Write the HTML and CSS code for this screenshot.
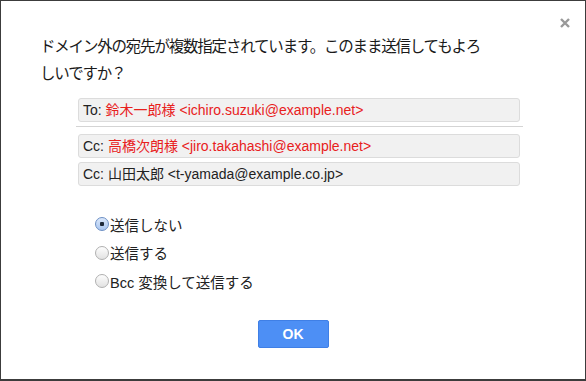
FILE: index.html
```html
<!DOCTYPE html>
<html lang="ja">
<head>
    <meta charset="UTF-8">
    <meta name="viewport" content="width=device-width, initial-scale=1.0">
    <title>送信確認</title>
    <link rel="stylesheet" href="styles.css">
</head>
<body>
    <div class="dialog">
        <span class="close">
            <svg width="10" height="10" viewBox="0 0 10 10"><path d="M1 1L9 9M9 1L1 9" stroke="#999" stroke-width="2.4"/></svg>
        </span>
        <p class="title">ドメイン外の宛先が複数指定されています。このまま送信してもよろしいですか？</p>

        <div class="recipients">
            <div class="addr">To: <span class="ext">鈴木一郎様 &lt;ichiro.suzuki@example.net&gt;</span></div>
            <div class="sep"></div>
            <div class="addr">Cc: <span class="ext">高橋次朗様 &lt;jiro.takahashi@example.net&gt;</span></div>
            <div class="addr">Cc: 山田太郎 &lt;t-yamada@example.co.jp&gt;</div>
        </div>

        <div class="options">
            <label class="option"><input type="radio" name="send" checked>送信しない</label>
            <label class="option"><input type="radio" name="send">送信する</label>
            <label class="option"><input type="radio" name="send">Bcc 変換して送信する</label>
        </div>

        <div class="actions">
            <button class="ok">OK</button>
        </div>
    </div>
</body>
</html>
```

FILE: styles.css
```css
html, body {
    margin: 0;
    height: 100%;
}
body {
    font-family: "Liberation Sans", Arial, "Noto Sans CJK JP", sans-serif;
    color: #222;
    background: #fff;
}
.dialog {
    position: relative;
    box-sizing: border-box;
    height: 381px;
    border: 1px solid #3c3c3c;
    border-bottom-width: 2px;
    padding: 31px 39px 0;
}
.close {
    position: absolute;
    top: 17px;
    right: 15px;
    display: flex;
}
.title {
    margin: 0;
    width: 448px;
    font-family: "Noto Sans CJK JP", sans-serif;
    font-size: 15.5px;
    letter-spacing: -1.2px;
    line-height: 27px;
    color: #1a1a1a;
}
.recipients {
    margin: 12px 0 0 38px;
    width: 442px;
}
.addr {
    box-sizing: border-box;
    height: 24px;
    line-height: 22px;
    padding: 0 4px;
    margin-bottom: 4px;
    font-size: 14px;
    color: #222;
    background: #f1f1f1;
    border: 1px solid #dcdcdc;
    border-radius: 3px;
    white-space: nowrap;
}
.ext {
    color: #e8201c;
}
.sep {
    height: 1px;
    margin: 3px -3px 7px -2px;
    background: #d4d4d4;
}
.options {
    margin: 24px 0 0 55px;
}
.option {
    display: flex;
    align-items: center;
    height: 28.5px;
    font-size: 14.5px;
    color: #222;
}
.option input {
    appearance: none;
    -webkit-appearance: none;
    box-sizing: border-box;
    width: 14px;
    height: 14px;
    margin: 0 1px 0 0;
    border: 1px solid #b0b0b0;
    border-radius: 50%;
    background: linear-gradient(#fdfdfd, #e2e2e2);
}
.option input:checked {
    border-color: #6c8fc4;
    background: radial-gradient(circle, #1e2a3a 0, #1e2a3a 2px, transparent 2.5px), linear-gradient(#dbe8fb, #a9c6f0);
}
.actions {
    display: flex;
    justify-content: center;
    margin-top: 24px;
}
.ok {
    width: 71px;
    height: 28px;
    font-family: "Liberation Sans", Arial, sans-serif;
    font-size: 14px;
    font-weight: bold;
    color: #fff;
    background: #4d8ff5;
    border: 1px solid #3f7fe6;
    border-radius: 2px;
    cursor: pointer;
}
```
